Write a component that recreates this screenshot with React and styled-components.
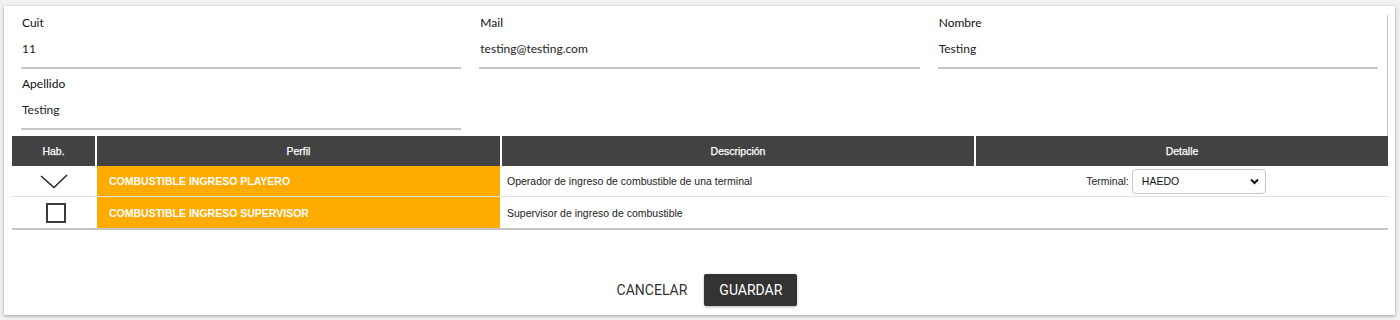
import styled, { createGlobalStyle } from "styled-components";

const GlobalStyle = createGlobalStyle`
  body {
    margin: 0;
    background-color: #f1f1f1;
    font-family: "Liberation Sans", Arial, sans-serif;
  }
`;

const Page = styled.div`
  padding: 6px 5px 6px 4px;
`;

const Card = styled.div`
  background-color: #fff;
  box-shadow: 0 1px 3px rgba(0, 0, 0, 0.35);
  padding: 9px 7px 9px 8px;
  display: flex;
  flex-direction: column;
`;

const Fields = styled.div`
  display: grid;
  grid-template-columns: repeat(3, 1fr);
  column-gap: 18px;
  row-gap: 7px;
  padding: 0 9px 6px 9px;
  border-right: 1px solid #c4c4c4;
`;

const Field = styled.div`
  display: flex;
  flex-direction: column;
  height: 54px;
  border-bottom: 2px solid #c8c8c8;
  box-sizing: border-box;
`;

const Label = styled.label`
  font-family: Lato, "Liberation Sans", sans-serif;
  font-size: 12px;
  line-height: 16px;
  color: #111;
  padding-left: 1px;
`;

const Value = styled.div`
  flex: 1;
  display: flex;
  align-items: center;
  font-family: Lato, "Liberation Sans", sans-serif;
  font-size: 12px;
  color: #222;
  padding: 0 0 2px 1px;
`;

const Table = styled.div`
  display: flex;
  flex-direction: column;
  border-bottom: 2px solid #c4c4c4;
`;

const Row = styled.div`
  display: grid;
  grid-template-columns: 83px 403px 472px 1fr;
  column-gap: 2px;
  height: ${(p) => (p.$head ? "30px" : "31px")};
  border-bottom: ${(p) => (p.$head || p.$last ? "none" : "1px solid #e2e2e2")};
  box-sizing: border-box;
`;

const HeadCell = styled.div`
  background-color: #424242;
  color: #fff;
  font-size: 10.5px;
  -webkit-text-stroke: 0.25px #fff;
  display: flex;
  align-items: center;
  justify-content: center;
`;

const Cell = styled.div`
  display: flex;
  align-items: center;
  justify-content: ${(p) => p.$align || "flex-start"};
  padding: ${(p) => p.$pad || "0"};
  font-size: 10.5px;
  color: #222;
  background-color: ${(p) => (p.$profile ? "#ffab00" : "transparent")};
  ${(p) => p.$profile && "color: #fff; font-weight: bold;"}
`;

const Box = styled.span`
  width: 16px;
  height: 16px;
  border: 2px solid #3a3a3a;
  margin-left: 4px;
`;

const Detail = styled.div`
  display: flex;
  align-items: center;
  gap: 3px;
  margin-left: -12px;
  font-size: 10.5px;
  color: #222;
`;

const SelectWrap = styled.div`
  position: relative;
  display: flex;
`;

const Select = styled.select`
  appearance: none;
  width: 134px;
  height: 25px;
  border: 1px solid #c8c8c8;
  border-radius: 4px;
  background: #fff;
  padding: 0 0 0 9px;
  font-family: "Liberation Sans", Arial, sans-serif;
  font-size: 10.5px;
  color: #111;
`;

const Caret = styled.svg`
  position: absolute;
  right: 7px;
  top: 9px;
  pointer-events: none;
`;

const Actions = styled.div`
  display: flex;
  justify-content: center;
  align-items: center;
  gap: 9px;
  margin-top: 44px;
  padding-left: 6px;
`;

const TextButton = styled.button`
  border: none;
  background: none;
  font-family: Roboto, "Liberation Sans", sans-serif;
  font-size: 14px;
  color: #333;
  padding: 0 8px;
  height: 32px;
`;

const SaveButton = styled.button`
  border: none;
  border-radius: 2px;
  background-color: #333;
  color: #fff;
  font-family: Roboto, "Liberation Sans", sans-serif;
  font-size: 14px;
  height: 32px;
  padding: 0 15px;
  box-shadow: 0 1px 3px rgba(0, 0, 0, 0.3);
`;

const Check = () => (
  <svg width="28" height="15" viewBox="0 0 28 15">
    <polyline points="1,2 14,13.5 27,1" fill="none" stroke="#222" strokeWidth="1.4" />
  </svg>
);

const fields = [
  { label: "Cuit", value: "11" },
  { label: "Mail", value: "testing@testing.com" },
  { label: "Nombre", value: "Testing" },
  { label: "Apellido", value: "Testing" },
];

const App = () => {
  return (
    <Page>
      <GlobalStyle />
      <Card>
        <Fields>
          {fields.map((f) => (
            <Field key={f.label}>
              <Label>{f.label}</Label>
              <Value>{f.value}</Value>
            </Field>
          ))}
        </Fields>
        <Table>
          <Row $head>
            <HeadCell>Hab.</HeadCell>
            <HeadCell>Perfil</HeadCell>
            <HeadCell>Descripción</HeadCell>
            <HeadCell>Detalle</HeadCell>
          </Row>
          <Row>
            <Cell $align="center">
              <Check />
            </Cell>
            <Cell $profile $pad="0 0 0 12px">
              COMBUSTIBLE INGRESO PLAYERO
            </Cell>
            <Cell $pad="0 0 0 5px">
              Operador de ingreso de combustible de una terminal
            </Cell>
            <Cell $align="center">
              <Detail>
                Terminal:
                <SelectWrap>
                  <Select defaultValue="HAEDO">
                    <option>HAEDO</option>
                  </Select>
                  <Caret width="9" height="7" viewBox="0 0 9 7">
                    <polyline points="1,1.5 4.5,5 8,1.5" fill="none" stroke="#111" strokeWidth="2" />
                  </Caret>
                </SelectWrap>
              </Detail>
            </Cell>
          </Row>
          <Row $last>
            <Cell $align="center">
              <Box />
            </Cell>
            <Cell $profile $pad="0 0 0 12px">
              COMBUSTIBLE INGRESO SUPERVISOR
            </Cell>
            <Cell $pad="0 0 0 5px">Supervisor de ingreso de combustible</Cell>
            <Cell />
          </Row>
        </Table>
        <Actions>
          <TextButton>CANCELAR</TextButton>
          <SaveButton>GUARDAR</SaveButton>
        </Actions>
      </Card>
    </Page>
  );
};

export default App;
